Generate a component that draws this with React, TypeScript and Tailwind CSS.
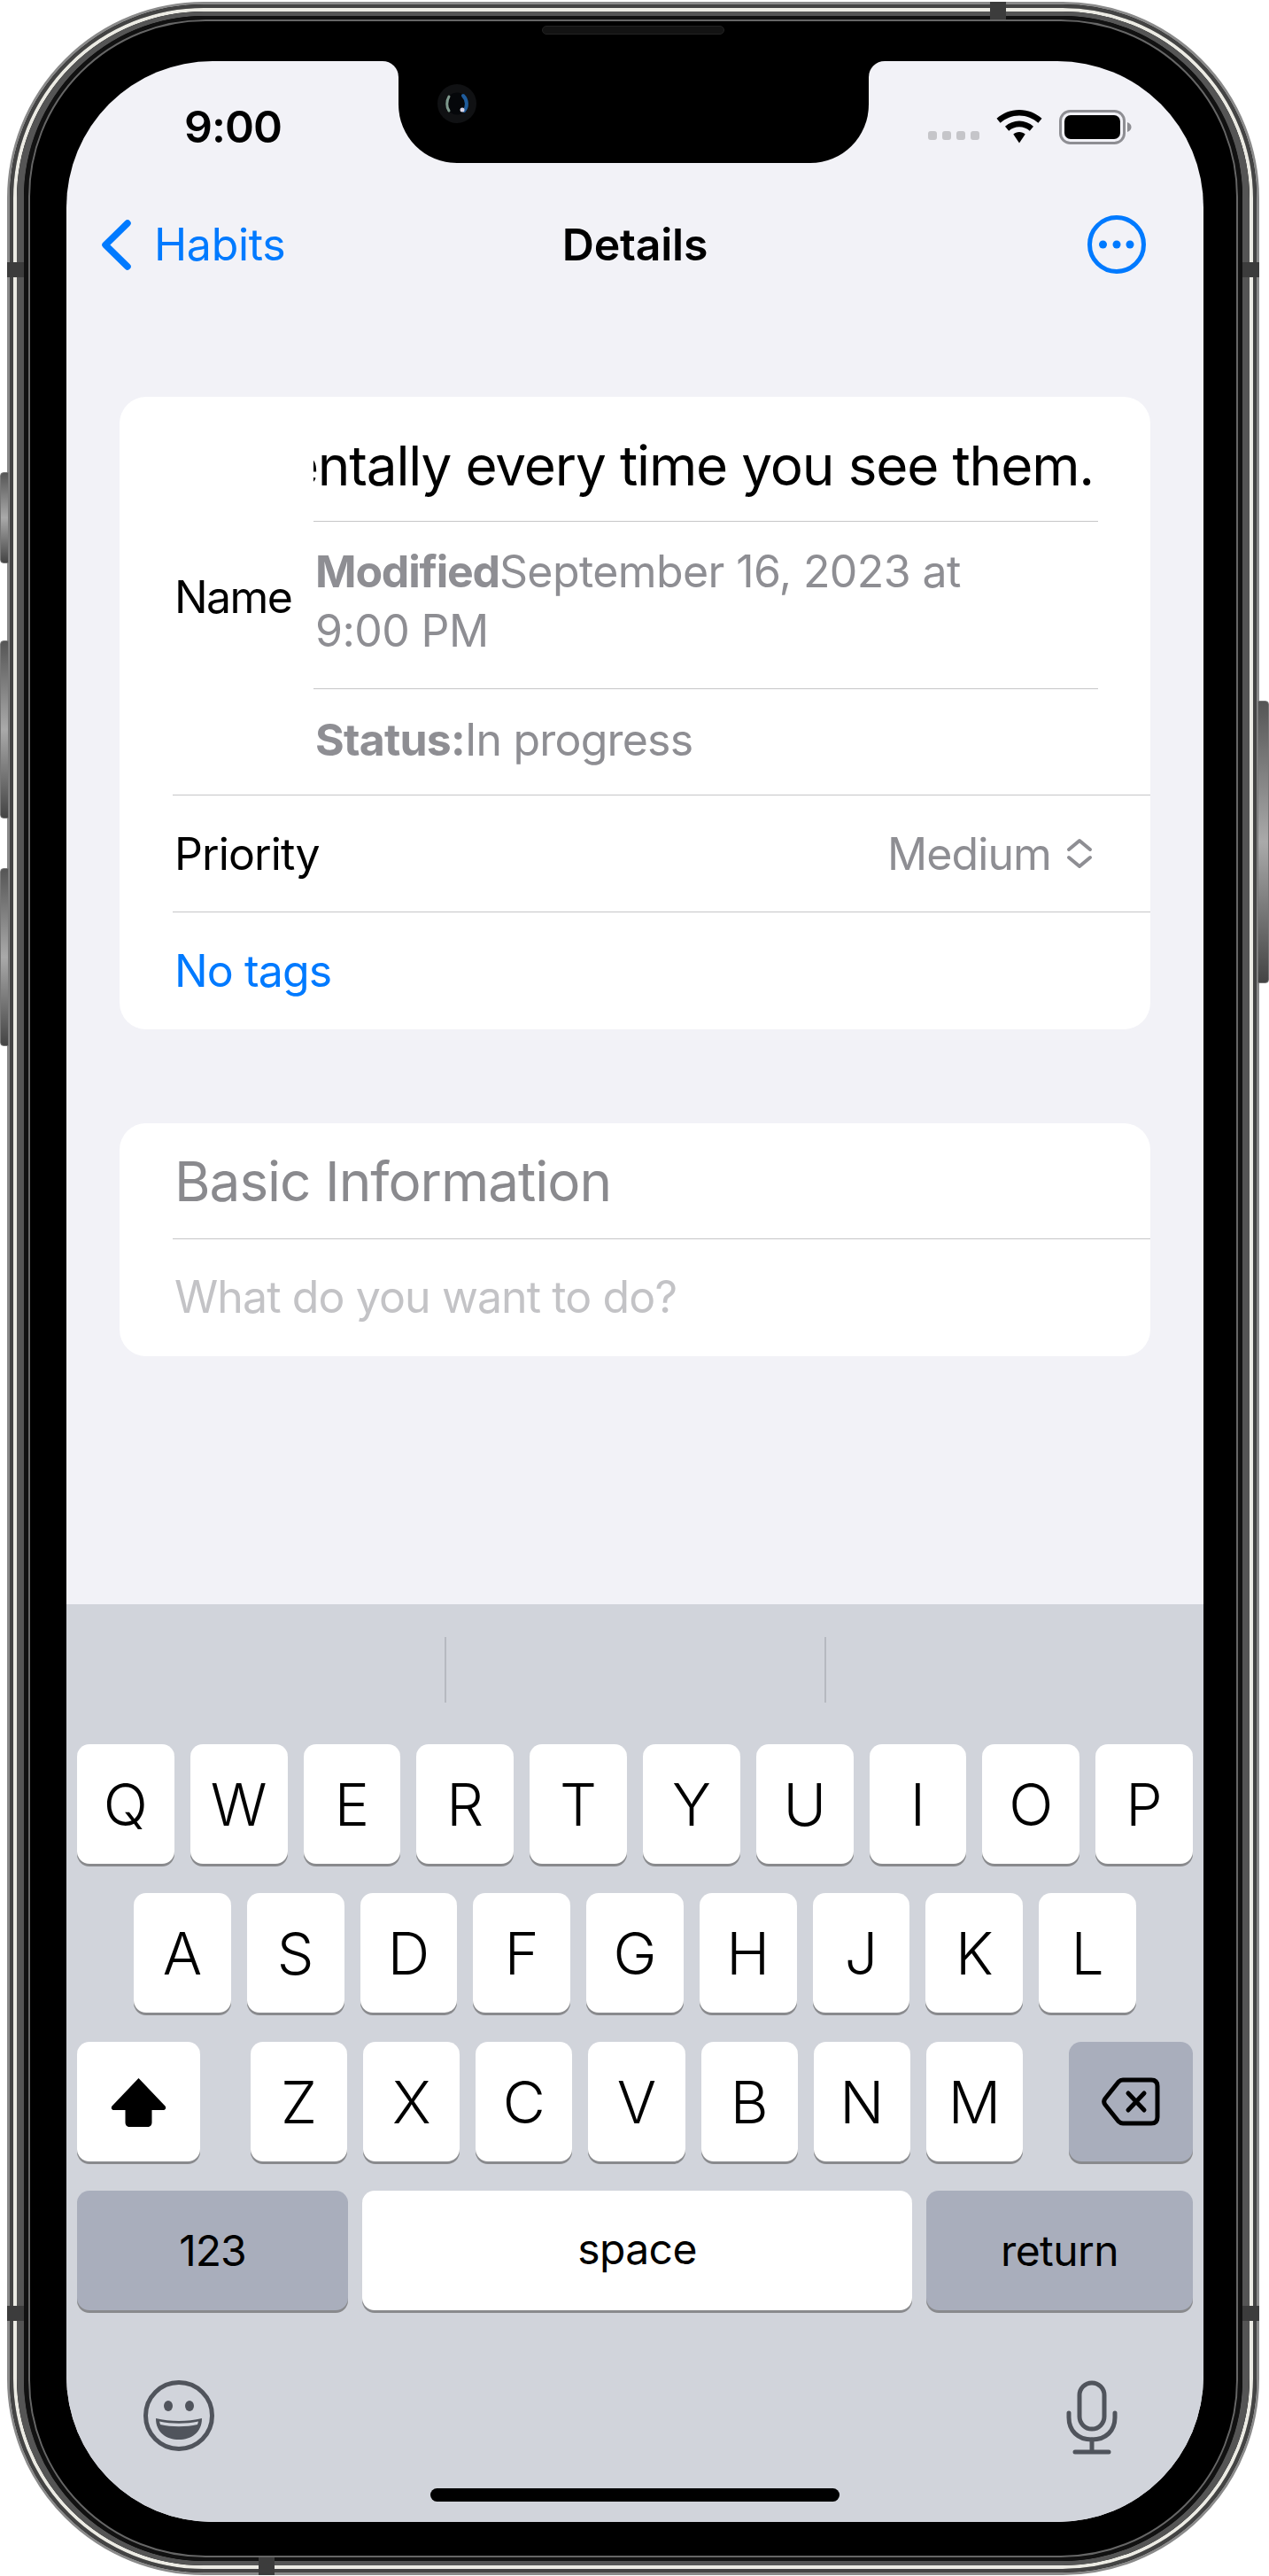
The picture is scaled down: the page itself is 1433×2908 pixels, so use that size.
import type { ReactNode } from "react";

const ROW_ONE = ["Q", "W", "E", "R", "T", "Y", "U", "I", "O", "P"];
const ROW_TWO = ["A", "S", "D", "F", "G", "H", "J", "K", "L"];
const ROW_THREE = ["Z", "X", "C", "V", "B", "N", "M"];

function Key({ children, dark = false, className = "" }: { children: ReactNode; dark?: boolean; className?: string }) {
  return (
    <div
      className={`flex h-[135px] items-center justify-center rounded-[14px] text-black shadow-[0_3px_0_#898a8d] ${
        dark ? "bg-[#a9aebc]" : "bg-white"
      } ${className}`}
    >
      {children}
    </div>
  );
}

function StatusBar() {
  return (
    <div className="flex h-[148px] shrink-0 items-center justify-between pr-[81px] pl-[133px]">
      <span className="text-[50px] leading-none font-semibold tracking-[-1px] text-black">9:00</span>
      <div className="flex items-center gap-[19px]">
        <div className="mt-[20px] flex gap-[6px]">
          <span className="h-[10px] w-[10px] rounded-[3px] bg-[#c5c5c9]" />
          <span className="h-[10px] w-[10px] rounded-[3px] bg-[#c5c5c9]" />
          <span className="h-[10px] w-[10px] rounded-[3px] bg-[#c5c5c9]" />
          <span className="h-[10px] w-[10px] rounded-[3px] bg-[#c5c5c9]" />
        </div>
        <svg width="52" height="38" viewBox="0 0 52 38">
          <path d="M26 0C16 0 7.500 3.600 0.500 9.800L4.600 14.800C10.400 9.600 17.800 6.500 26 6.500C34.200 6.500 41.600 9.600 47.400 14.800L51.500 9.800C44.500 3.600 36 0 26 0Z" />
          <path d="M26 12.500C20 12.500 14.500 14.800 10 18.700L14.200 23.700C17.400 20.900 21.500 19.200 26 19.200C30.500 19.200 34.600 20.900 37.800 23.700L42 18.700C37.500 14.800 32 12.500 26 12.500Z" />
          <path d="M26 25C23.400 25 21 25.900 19.300 27.500L26 37.500L32.700 27.500C31 25.900 28.600 25 26 25Z" />
        </svg>
        <svg width="82" height="39" viewBox="0 0 82 39">
          <rect x="1.500" y="1.500" width="72" height="36" rx="11" fill="none" stroke="#8e8e93" strokeWidth="3" />
          <rect x="6" y="6" width="63" height="27" rx="7" fill="#000" />
          <path d="M77 14C80 15 81.500 17 81.500 19.500C81.500 22 80 24 77 25Z" fill="#8e8e93" />
        </svg>
      </div>
    </div>
  );
}

function NavBar() {
  return (
    <div className="relative flex h-[118px] shrink-0 items-center justify-between pr-[65px] pl-[40px]">
      <div className="flex items-center gap-[26px] text-[#007aff]">
        <svg width="33" height="57" viewBox="0 0 33 57" fill="none" stroke="#007aff" strokeWidth="7.500" strokeLinecap="round" strokeLinejoin="round">
          <path d="M29 4L4 28.500L29 53" />
        </svg>
        <span className="text-[50px] leading-none tracking-[-0.3px]">Habits</span>
      </div>
      <span className="absolute left-0 w-full text-center text-[50px] leading-none font-semibold tracking-[-0.2px] text-black">
        Details
      </span>
      <svg width="66" height="66" viewBox="0 0 66 66">
        <circle cx="33" cy="33" r="30.500" fill="none" stroke="#007aff" strokeWidth="5" />
        <circle cx="17.500" cy="33" r="4.500" fill="#007aff" />
        <circle cx="33" cy="33" r="4.500" fill="#007aff" />
        <circle cx="48" cy="33" r="4.500" fill="#007aff" />
      </svg>
    </div>
  );
}

function DetailsCard() {
  return (
    <div className="mx-[60px] mt-[113px] flex flex-col rounded-[30px] bg-white">
      <div className="flex h-[449px] items-center pl-[62px]">
        <span className="w-[157px] shrink-0 pt-[2px] text-[50px] leading-none tracking-[-1.6px] text-black">Name</span>
        <div className="mr-[59px] flex min-w-0 flex-1 flex-col self-stretch">
          <div className="flex h-[141px] items-center justify-end overflow-hidden border-b border-[#c6c6c8] pt-[16px] pr-[5px]">
            <span className="text-[62px] leading-none tracking-[-1.15px] whitespace-nowrap text-black">
              entally every time you see them.
            </span>
          </div>
          <div className="flex h-[189px] items-center border-b border-[#c6c6c8] pb-[9px] pl-[2px] text-[50px] leading-[67px] tracking-[-0.6px] text-[#8e8e93]">
            <p>
              <span className="font-bold tracking-[-1.2px]">Modified</span>September 16, 2023 at
              <br />
              9:00 PM
            </p>
          </div>
          <div className="flex flex-1 items-center pb-[6px] pl-[2px] text-[50px] leading-none tracking-[-0.8px] text-[#8e8e93]">
            <span className="font-bold">Status:</span>In progress
          </div>
        </div>
      </div>
      <div className="ml-[60px] flex h-[132px] items-center justify-between border-t border-[#c6c6c8] pr-[65px] pl-[2px]">
        <span className="text-[50px] leading-none tracking-[-0.9px] text-black">Priority</span>
        <div className="flex items-center gap-[17px]">
          <span className="text-[50px] leading-none tracking-[-0.9px] text-[#8e8e93]">Medium</span>
          <svg width="30" height="35" viewBox="0 0 30 35" fill="none" stroke="#8e8e93" strokeWidth="4" strokeLinecap="round" strokeLinejoin="round">
            <path d="M3 13L15 3L27 13" />
            <path d="M3 22L15 32L27 22" />
          </svg>
        </div>
      </div>
      <div className="ml-[60px] flex h-[133px] items-center border-t border-[#c6c6c8] pl-[2px]">
        <span className="text-[50px] leading-none tracking-[-0.9px] text-[#007aff]">No tags</span>
      </div>
    </div>
  );
}

function BasicInfoCard() {
  return (
    <div className="mx-[60px] mt-[106px] flex flex-col rounded-[30px] bg-white">
      <div className="ml-[60px] flex h-[131px] items-center border-b border-[#c6c6c8] pt-[2px] pl-[2px]">
        <span className="text-[62px] leading-none tracking-[-1px] text-[#8a8a8e]">Basic Information</span>
      </div>
      <div className="ml-[60px] flex h-[132px] items-center pb-[2px] pl-[2px]">
        <span className="text-[50px] leading-none tracking-[-0.9px] text-[#c3c3c6]">What do you want to do?</span>
      </div>
    </div>
  );
}

function Keyboard() {
  return (
    <div className="mt-auto flex h-[1036px] shrink-0 flex-col bg-[#d1d4db]">
      <div className="flex h-[158px] shrink-0 justify-center gap-[427px] pt-[37px]">
        <span className="h-[74px] w-[2px] bg-[#b6b9c0]" />
        <span className="h-[74px] w-[2px] bg-[#b6b9c0]" />
      </div>
      <div className="flex flex-col gap-[33px] px-[12px] text-[66px] leading-none font-light">
        <div className="flex gap-[18px]">
          {ROW_ONE.map((k) => (
            <Key key={k} className="flex-1">{k}</Key>
          ))}
        </div>
        <div className="flex gap-[18px] px-[64px]">
          {ROW_TWO.map((k) => (
            <Key key={k} className="flex-1">{k}</Key>
          ))}
        </div>
        <div className="flex">
          <Key className="w-[139px]">
            <svg width="63" height="56" viewBox="0 0 63 56">
              <path d="M31.500 1L61.500 32.500C63 34.200 62 37 59.500 37H46.500V51C46.500 54 44.500 56 41.500 56H21.500C18.500 56 16.500 54 16.500 51V37H3.500C1 37 0 34.200 1.500 32.500Z" fill="#000" />
            </svg>
          </Key>
          <div className="ml-[57px] flex w-[872px] gap-[18px]">
            {ROW_THREE.map((k) => (
              <Key key={k} className="flex-1">{k}</Key>
            ))}
          </div>
          <Key dark className="ml-auto w-[140px]">
            <svg width="66" height="55" viewBox="0 0 66 55" fill="none" stroke="#000" strokeWidth="5" strokeLinecap="round" strokeLinejoin="round">
              <path d="M24 3H56C60.500 3 63 5.500 63 10V45C63 49.500 60.500 52 56 52H24C22 52 20.500 51.300 19 49.800L4 31C2.500 29 2.500 26 4 24L19 5.200C20.500 3.700 22 3 24 3Z" />
              <path d="M30 18L48 37M48 18L30 37" />
            </svg>
          </Key>
        </div>
        <div className="flex gap-[16px] text-[48px] font-normal">
          <Key dark className="w-[306px] tracking-[-1px]">123</Key>
          <Key className="flex-1 pb-[4px] tracking-[-0.6px]">space</Key>
          <Key dark className="w-[301px] tracking-[-0.6px]">return</Key>
        </div>
      </div>
      <div className="flex flex-1 items-start justify-between pt-[79px] pr-[97px] pl-[87px]">
        <svg width="80" height="80" viewBox="0 0 80 80">
          <circle cx="40" cy="40" r="37.500" fill="none" stroke="#50545c" strokeWidth="5" />
          <ellipse cx="28" cy="29" rx="5" ry="6" fill="#50545c" />
          <ellipse cx="52" cy="29" rx="5" ry="6" fill="#50545c" />
          <path d="M14 43C30 47 50 47 66 43C66 59 54 67 40 67C26 67 14 59 14 43Z" fill="#50545c" />
          <path d="M18 46.500C32 49.500 48 49.500 62 46.500L61 50C48 53 32 53 19 50Z" fill="#d1d4db" />
        </svg>
        <svg width="58" height="84" viewBox="0 0 58 84" fill="none" stroke="#50545c" strokeWidth="5" strokeLinecap="round" strokeLinejoin="round">
          <rect x="15" y="3" width="28" height="52" rx="14" />
          <path d="M3 37V42C3 57 13 67 29 67C45 67 55 57 55 42V37" />
          <path d="M29 67V81M10 81H48" />
        </svg>
      </div>
      <div className="flex justify-center pb-[23px]">
        <span className="h-[15px] w-[462px] rounded-full bg-black" />
      </div>
    </div>
  );
}

function Notch() {
  return (
    <>
      <div className="absolute top-0 left-[375px] flex h-[115px] w-[531px] rounded-b-[66px] bg-black">
        <svg className="absolute top-[26px] left-[44px]" width="44" height="44" viewBox="0 0 44 44">
          <circle cx="22" cy="22" r="22" fill="#101113" />
          <circle cx="22" cy="22" r="12.500" fill="#05070a" />
          <path d="M13 14C10 19 10 26 13 30" fill="none" stroke="#7f9a8e" strokeWidth="3" strokeLinecap="round" />
          <path d="M29 13C34 18 34 26 30 30" fill="none" stroke="#1f5c9c" strokeWidth="4" strokeLinecap="round" />
          <circle cx="28" cy="29" r="2.500" fill="#d9d5e6" />
        </svg>
      </div>
      <div className="absolute top-0 left-[357px] h-[18px] w-[18px] bg-black">
        <div className="h-full w-full rounded-tr-[18px] bg-[#f2f2f7]" />
      </div>
      <div className="absolute top-0 left-[906px] h-[18px] w-[18px] bg-black">
        <div className="h-full w-full rounded-tl-[18px] bg-[#f2f2f7]" />
      </div>
    </>
  );
}

export default function App() {
  return (
    <div className="relative h-[2908px] w-[1433px] overflow-hidden bg-white font-['Inter',sans-serif]">
      {/* side buttons */}
      <span className="absolute top-[533px] left-0 h-[103px] w-[10px] rounded-l-[4px] border border-[#777] bg-[linear-gradient(180deg,#555,#aaa_50%,#444)]" />
      <span className="absolute top-[723px] left-0 h-[201px] w-[10px] rounded-l-[4px] border border-[#777] bg-[linear-gradient(180deg,#555,#aaa_50%,#444)]" />
      <span className="absolute top-[980px] left-0 h-[201px] w-[10px] rounded-l-[4px] border border-[#777] bg-[linear-gradient(180deg,#555,#aaa_50%,#444)]" />
      <span className="absolute top-[791px] right-0 h-[319px] w-[13px] rounded-r-[4px] border border-[#777] bg-[linear-gradient(180deg,#555,#aaa_50%,#444)]" />

      <div className="mt-[2px] ml-[8px] h-[2905px] w-[1414px] rounded-[222px] border-[3px] border-[#8a8a8a] bg-black">
        <div className="h-full w-full rounded-[219px] border-[4px] border-[#444444]">
          <div className="h-full w-full rounded-[215px] border-[4px] border-[#ecebe4]">
            <div className="h-full w-full rounded-[211px] border-x-[8px] border-y-[5px] border-[#555555]">
              <div className="h-full w-full rounded-[204px] border-x-[5px] border-y-[4px] border-[#111111]">
                <div className="h-full w-full rounded-[200px] border-[2px] border-[#666666] bg-black pt-[45px] pl-[41px]">
                  <div className="relative flex h-[2778px] w-[1284px] flex-col overflow-hidden rounded-[165px] bg-[#f2f2f7]">
                    <Notch />
                    <StatusBar />
                    <NavBar />
                    <DetailsCard />
                    <BasicInfoCard />
                    <Keyboard />
                  </div>
                </div>
              </div>
            </div>
          </div>
        </div>
      </div>

      {/* speaker grille */}
      <span className="absolute top-[29px] left-[612px] h-[10px] w-[206px] rounded-full border border-[#222] bg-[#131313]" />

      {/* antenna bands */}
      <span className="absolute top-[296px] left-[8px] h-[17px] w-[19px] bg-[#3c3c3c]" />
      <span className="absolute top-[296px] left-[1403px] h-[17px] w-[19px] bg-[#3c3c3c]" />
      <span className="absolute top-[2603px] left-[8px] h-[17px] w-[19px] bg-[#3c3c3c]" />
      <span className="absolute top-[2603px] left-[1403px] h-[17px] w-[19px] bg-[#3c3c3c]" />
      <span className="absolute top-[2px] left-[1118px] h-[20px] w-[18px] bg-[#3c3c3c]" />
      <span className="absolute top-[2887px] left-[292px] h-[20px] w-[18px] bg-[#3c3c3c]" />
    </div>
  );
}
